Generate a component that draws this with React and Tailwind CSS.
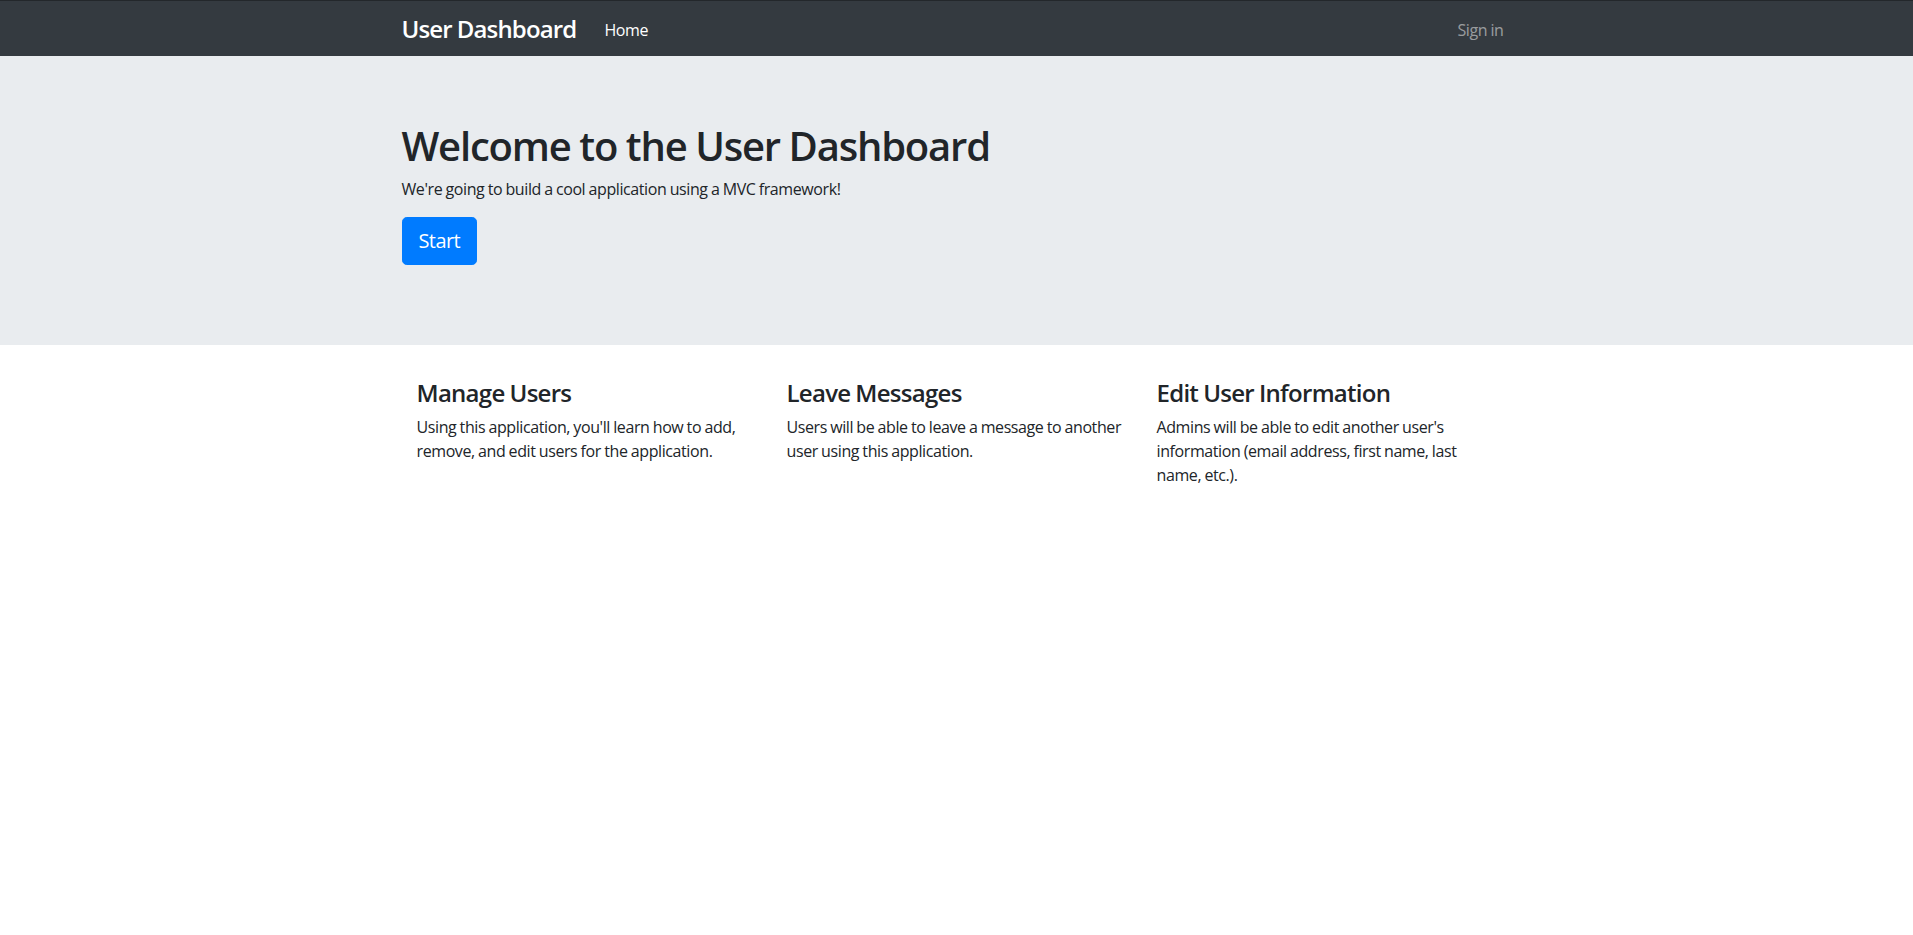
const features = [
  {
    title: "Manage Users",
    text: "Using this application, you'll learn how to add, remove, and edit users for the application.",
  },
  {
    title: "Leave Messages",
    text: "Users will be able to leave a message to another user using this application.",
  },
  {
    title: "Edit User Information",
    text: "Admins will be able to edit another user's information (email address, first name, last name, etc.).",
  },
];

export default function App() {
  return (
    <div
      className="min-h-screen bg-white text-[16px] leading-6 text-[#212529] tracking-[-0.025em] [word-spacing:-0.5px]"
      style={{ fontFamily: '"Open Sans", "Noto Sans", sans-serif' }}
    >
      <nav className="bg-[#343a40] border-t border-[#23272b]">
        <div className="mx-auto flex h-[55px] w-[1140px] items-center px-[15px]">
          <a href="#" className="mr-5 text-[24px] font-semibold leading-[30px] tracking-[-0.035em] text-white">
            User Dashboard
          </a>
          <a href="#" className="px-2 py-2 pt-[10px] text-white">
            Home
          </a>
          <a href="#" className="ml-auto px-2 py-2 pt-[10px] text-white/50">
            Sign in
          </a>
        </div>
      </nav>

      <div className="mb-8 bg-[#e9ecef] pb-16 pt-[66px]">
        <div className="mx-auto w-[1140px] px-[15px]">
          <h1 className="mb-[7px] text-[40px] font-semibold leading-[1.2] tracking-[-0.03em]">
            Welcome to the User Dashboard
          </h1>
          <p className="mb-4">We're going to build a cool application using a MVC framework!</p>
          <p className="mb-4">
            <a
              href="#"
              className="inline-block rounded-[4.8px] border border-[#007bff] bg-[#007bff] px-4 py-2 text-[20px] leading-[30px] tracking-[-0.03em] text-white"
            >
              Start
            </a>
          </p>
        </div>
      </div>

      <div className="mx-auto flex w-[1140px] px-[15px] pt-[2px]">
        {features.map((f) => (
          <div key={f.title} className="w-1/3 px-[15px]">
            <h4 className="mb-[7px] text-[24px] font-semibold leading-[1.2] tracking-[-0.03em]">{f.title}</h4>
            <p className="mb-4">{f.text}</p>
          </div>
        ))}
      </div>
    </div>
  );
}
